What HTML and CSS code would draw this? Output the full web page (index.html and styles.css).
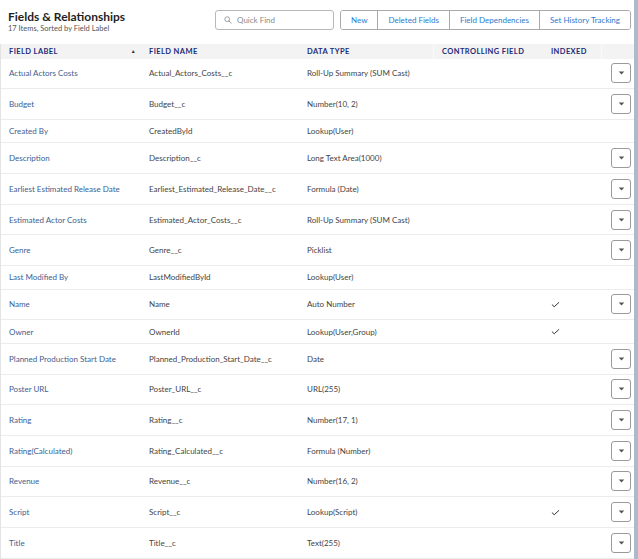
FILE: index.html
```html
<!DOCTYPE html>
<html lang="en">
<head>
<meta charset="utf-8">
<title>Fields &amp; Relationships</title>
<link rel="stylesheet" href="styles.css">
</head>
<body>
<div class="page">
  <header class="top">
    <div class="titles">
      <h1 class="title">Fields &amp; Relationships</h1>
      <p class="subtitle">17 Items, Sorted by Field Label</p>
    </div>
    <div class="tools">
      <div class="search">
        <svg class="search-icon" viewBox="0 0 10 10" width="8" height="8"><circle cx="4" cy="4" r="3" fill="none" stroke="#8a8a8a" stroke-width="1"/><line x1="6.2" y1="6.2" x2="9" y2="9" stroke="#8a8a8a" stroke-width="1.1" stroke-linecap="round"/></svg>
        <span class="placeholder">Quick Find</span>
      </div>
      <div class="btn-group">
        <button class="btn">New</button>
        <button class="btn">Deleted Fields</button>
        <button class="btn">Field Dependencies</button>
        <button class="btn">Set History Tracking</button>
      </div>
    </div>
  </header>

  <div class="table">
    <div class="row head">
      <div class="cell hcell sortable"><span>FIELD LABEL</span><span class="sort">&#9650;</span></div>
      <div class="cell hcell">FIELD NAME</div>
      <div class="cell hcell">DATA TYPE</div>
      <div class="cell hcell sep">CONTROLLING FIELD</div>
      <div class="cell hcell">INDEXED</div>
      <div class="cell hcell sep"></div>
    </div>
  </div>
</div>
<script src="app.js"></script>
</body>
</html>
```

FILE: app.js
```js
const rows = [
  ["Actual Actors Costs","Actual_Actors_Costs__c","Roll-Up Summary (SUM Cast)",false,true],
  ["Budget","Budget__c","Number(10, 2)",false,true],
  ["Created By","CreatedById","Lookup(User)",false,false],
  ["Description","Description__c","Long Text Area(1000)",false,true],
  ["Earliest Estimated Release Date","Earliest_Estimated_Release_Date__c","Formula (Date)",false,true],
  ["Estimated Actor Costs","Estimated_Actor_Costs__c","Roll-Up Summary (SUM Cast)",false,true],
  ["Genre","Genre__c","Picklist",false,true],
  ["Last Modified By","LastModifiedById","Lookup(User)",false,false],
  ["Name","Name","Auto Number",true,true],
  ["Owner","OwnerId","Lookup(User,Group)",true,false],
  ["Planned Production Start Date","Planned_Production_Start_Date__c","Date",false,true],
  ["Poster URL","Poster_URL__c","URL(255)",false,true],
  ["Rating","Rating__c","Number(17, 1)",false,true],
  ["Rating(Calculated)","Rating_Calculated__c","Formula (Number)",false,true],
  ["Revenue","Revenue__c","Number(16, 2)",false,true],
  ["Script","Script__c","Lookup(Script)",true,true],
  ["Title","Title__c","Text(255)",false,true]
];
const table = document.querySelector('.table');
const check = '<svg class="check" viewBox="0 0 10 7" width="9" height="7"><path d="M1 3.6 L3.6 6 L9 1" fill="none" stroke="#333" stroke-width="1.1"/></svg>';
const menu = '<button class="menu-btn"><svg viewBox="0 0 8 5" width="7" height="4"><path d="M0.5 0.5 H7.5 L4 4.5 Z" fill="#555"/></svg></button>';
for (const [label, name, type, indexed, hasMenu] of rows) {
  const r = document.createElement('div');
  r.className = 'row' + (hasMenu ? ' tall' : ' short');
  r.innerHTML =
    '<div class="cell label">' + label + '</div>' +
    '<div class="cell name">' + name + '</div>' +
    '<div class="cell type">' + type + '</div>' +
    '<div class="cell"></div>' +
    '<div class="cell">' + (indexed ? check : '') + '</div>' +
    '<div class="cell action">' + (hasMenu ? menu : '') + '</div>';
  table.appendChild(r);
}
```

FILE: styles.css
```css
* { box-sizing: border-box; }
html, body { margin: 0; padding: 0; background: #fff; }
body {
  font-family: Lato, "Open Sans", "Liberation Sans", sans-serif;
  color: #3e3e3c;
}
.page {
  width: 638px;
  min-height: 559px;
  border-right: 4px solid #adbacb;
}
.top {
  height: 43.5px;
  display: flex;
  justify-content: space-between;
  align-items: flex-start;
  padding: 0 3px 0 8px;
}
.titles { padding-top: 8.5px; }
.title {
  margin: 0;
  font-size: 12px;
  line-height: 15px;
  font-weight: 700;
  color: #1f1f1f;
}
.subtitle {
  margin: 0;
  font-size: 7.5px;
  line-height: 10px;
  color: #555;
}
.tools {
  display: flex;
  gap: 6px;
  margin-top: 9.5px;
}
.search {
  width: 119px;
  height: 20px;
  border: 1px solid #b8b8b8;
  border-radius: 3px;
  display: flex;
  align-items: center;
  padding-left: 8px;
  gap: 5px;
}
.placeholder { font-size: 8px; color: #8a8a8a; }
.btn-group {
  display: flex;
  height: 20px;
  border: 1px solid #a9a9a9;
  border-radius: 3px;
  overflow: hidden;
}
.btn {
  font-family: inherit;
  font-size: 8px;
  color: #2b7bd0;
  background: #fff;
  border: 0;
  border-left: 1px solid #a9a9a9;
  padding: 0 10px;
  margin: 0;
  height: 18px;
}
.btn:first-child { border-left: 0; }

.table { border-left: 1px solid #e3e3e3; }
.row {
  display: grid;
  grid-template-columns: 140px 158px 134px 110px 58px 33px;
  align-items: center;
  border-bottom: 1px solid #ececec;
  font-size: 8px;
}
.row.head {
  height: 15px;
  background: #f3f3f3;
  border-bottom: 0;
}
.row.tall { height: 30.7px; }
.row.short { height: 23.5px; }
.cell {
  padding-left: 8px;
  white-space: nowrap;
  overflow: hidden;
  display: flex;
  align-items: center;
  height: 100%;
}
.hcell {
  font-size: 7.5px;
  font-weight: 700;
  letter-spacing: 0.4px;
  color: #222a78;
}
.sep { border-left: 1px solid #fafafa; }
.sortable { justify-content: space-between; padding-right: 5px; }
.sort { font-size: 5px; color: #333; }
.label { color: #41608f; }
.name, .type { color: #444; }
.action { justify-content: flex-end; padding-right: 3px; }
.menu-btn {
  width: 20px;
  height: 20px;
  border: 1px solid #9a9a9a;
  border-radius: 3px;
  background: #fff;
  padding: 0;
  display: flex;
  align-items: center;
  justify-content: center;
}
.check { display: block; }
```
